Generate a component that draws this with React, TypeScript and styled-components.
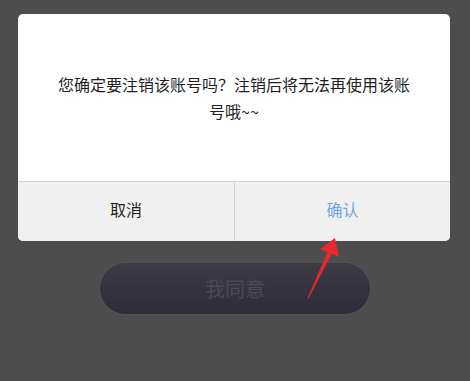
import styled, { createGlobalStyle } from "styled-components";

const GlobalStyle = createGlobalStyle`
  html, body {
    margin: 0;
    padding: 0;
    background: #4d4d4d;
  }
  body {
    font-family: "Noto Sans CJK SC", "Noto Sans", sans-serif;
  }
`;

const Page = styled.div`
  position: relative;
  width: 470px;
  height: 381px;
  background: #4d4d4d;
  padding-top: 14px;
  box-sizing: border-box;
  display: flex;
  flex-direction: column;
  align-items: center;
  overflow: hidden;
`;

const Dialog = styled.div`
  width: 432px;
  margin-left: -2px;
  background: #ffffff;
  border-radius: 5px;
  overflow: hidden;
  display: flex;
  flex-direction: column;
`;

const Message = styled.div`
  height: 167px;
  display: flex;
  align-items: center;
  justify-content: center;
  padding: 0 36px;
  text-align: center;
  font-size: 16px;
  line-height: 27px;
  color: #1f1f1f;
`;

const Actions = styled.div`
  display: grid;
  grid-template-columns: 1fr 1fr;
  height: 59px;
  background: #f0f0f0;
  border-top: 1px solid #d6d6d6;
`;

const Action = styled.div<{ $primary?: boolean }>`
  display: flex;
  align-items: center;
  justify-content: center;
  padding-bottom: 5px;
  font-size: 16px;
  color: ${(p) => (p.$primary ? "#6ea6e2" : "#1f1f1f")};
  & + & {
    border-left: 1px solid #d6d6d6;
  }
`;

const AgreeButton = styled.div`
  margin-top: 22px;
  width: 270px;
  height: 51px;
  border-radius: 26px;
  background: linear-gradient(#3d3b46, #2f2c3b);
  box-shadow: 0 0 3px rgba(120, 118, 130, 0.35);
  display: flex;
  align-items: center;
  justify-content: center;
  font-size: 20px;
  color: #4b4955;
`;

const Arrow = styled.svg`
  position: absolute;
  left: 300px;
  top: 232px;
`;

export default function App() {
  return (
    <Page>
      <GlobalStyle />
      <Dialog>
        <Message>您确定要注销该账号吗？注销后将无法再使用该账号哦~~</Message>
        <Actions>
          <Action>取消</Action>
          <Action $primary>确认</Action>
        </Actions>
      </Dialog>
      <AgreeButton>我同意</AgreeButton>
      <Arrow width="50" height="75" viewBox="0 0 50 75">
        <polygon points="7.5,66 28,19 32,21 8.5,66.5" fill="#e8282b" />
        <polygon points="35,6 39,25 20,17" fill="#e8282b" />
      </Arrow>
    </Page>
  );
}
